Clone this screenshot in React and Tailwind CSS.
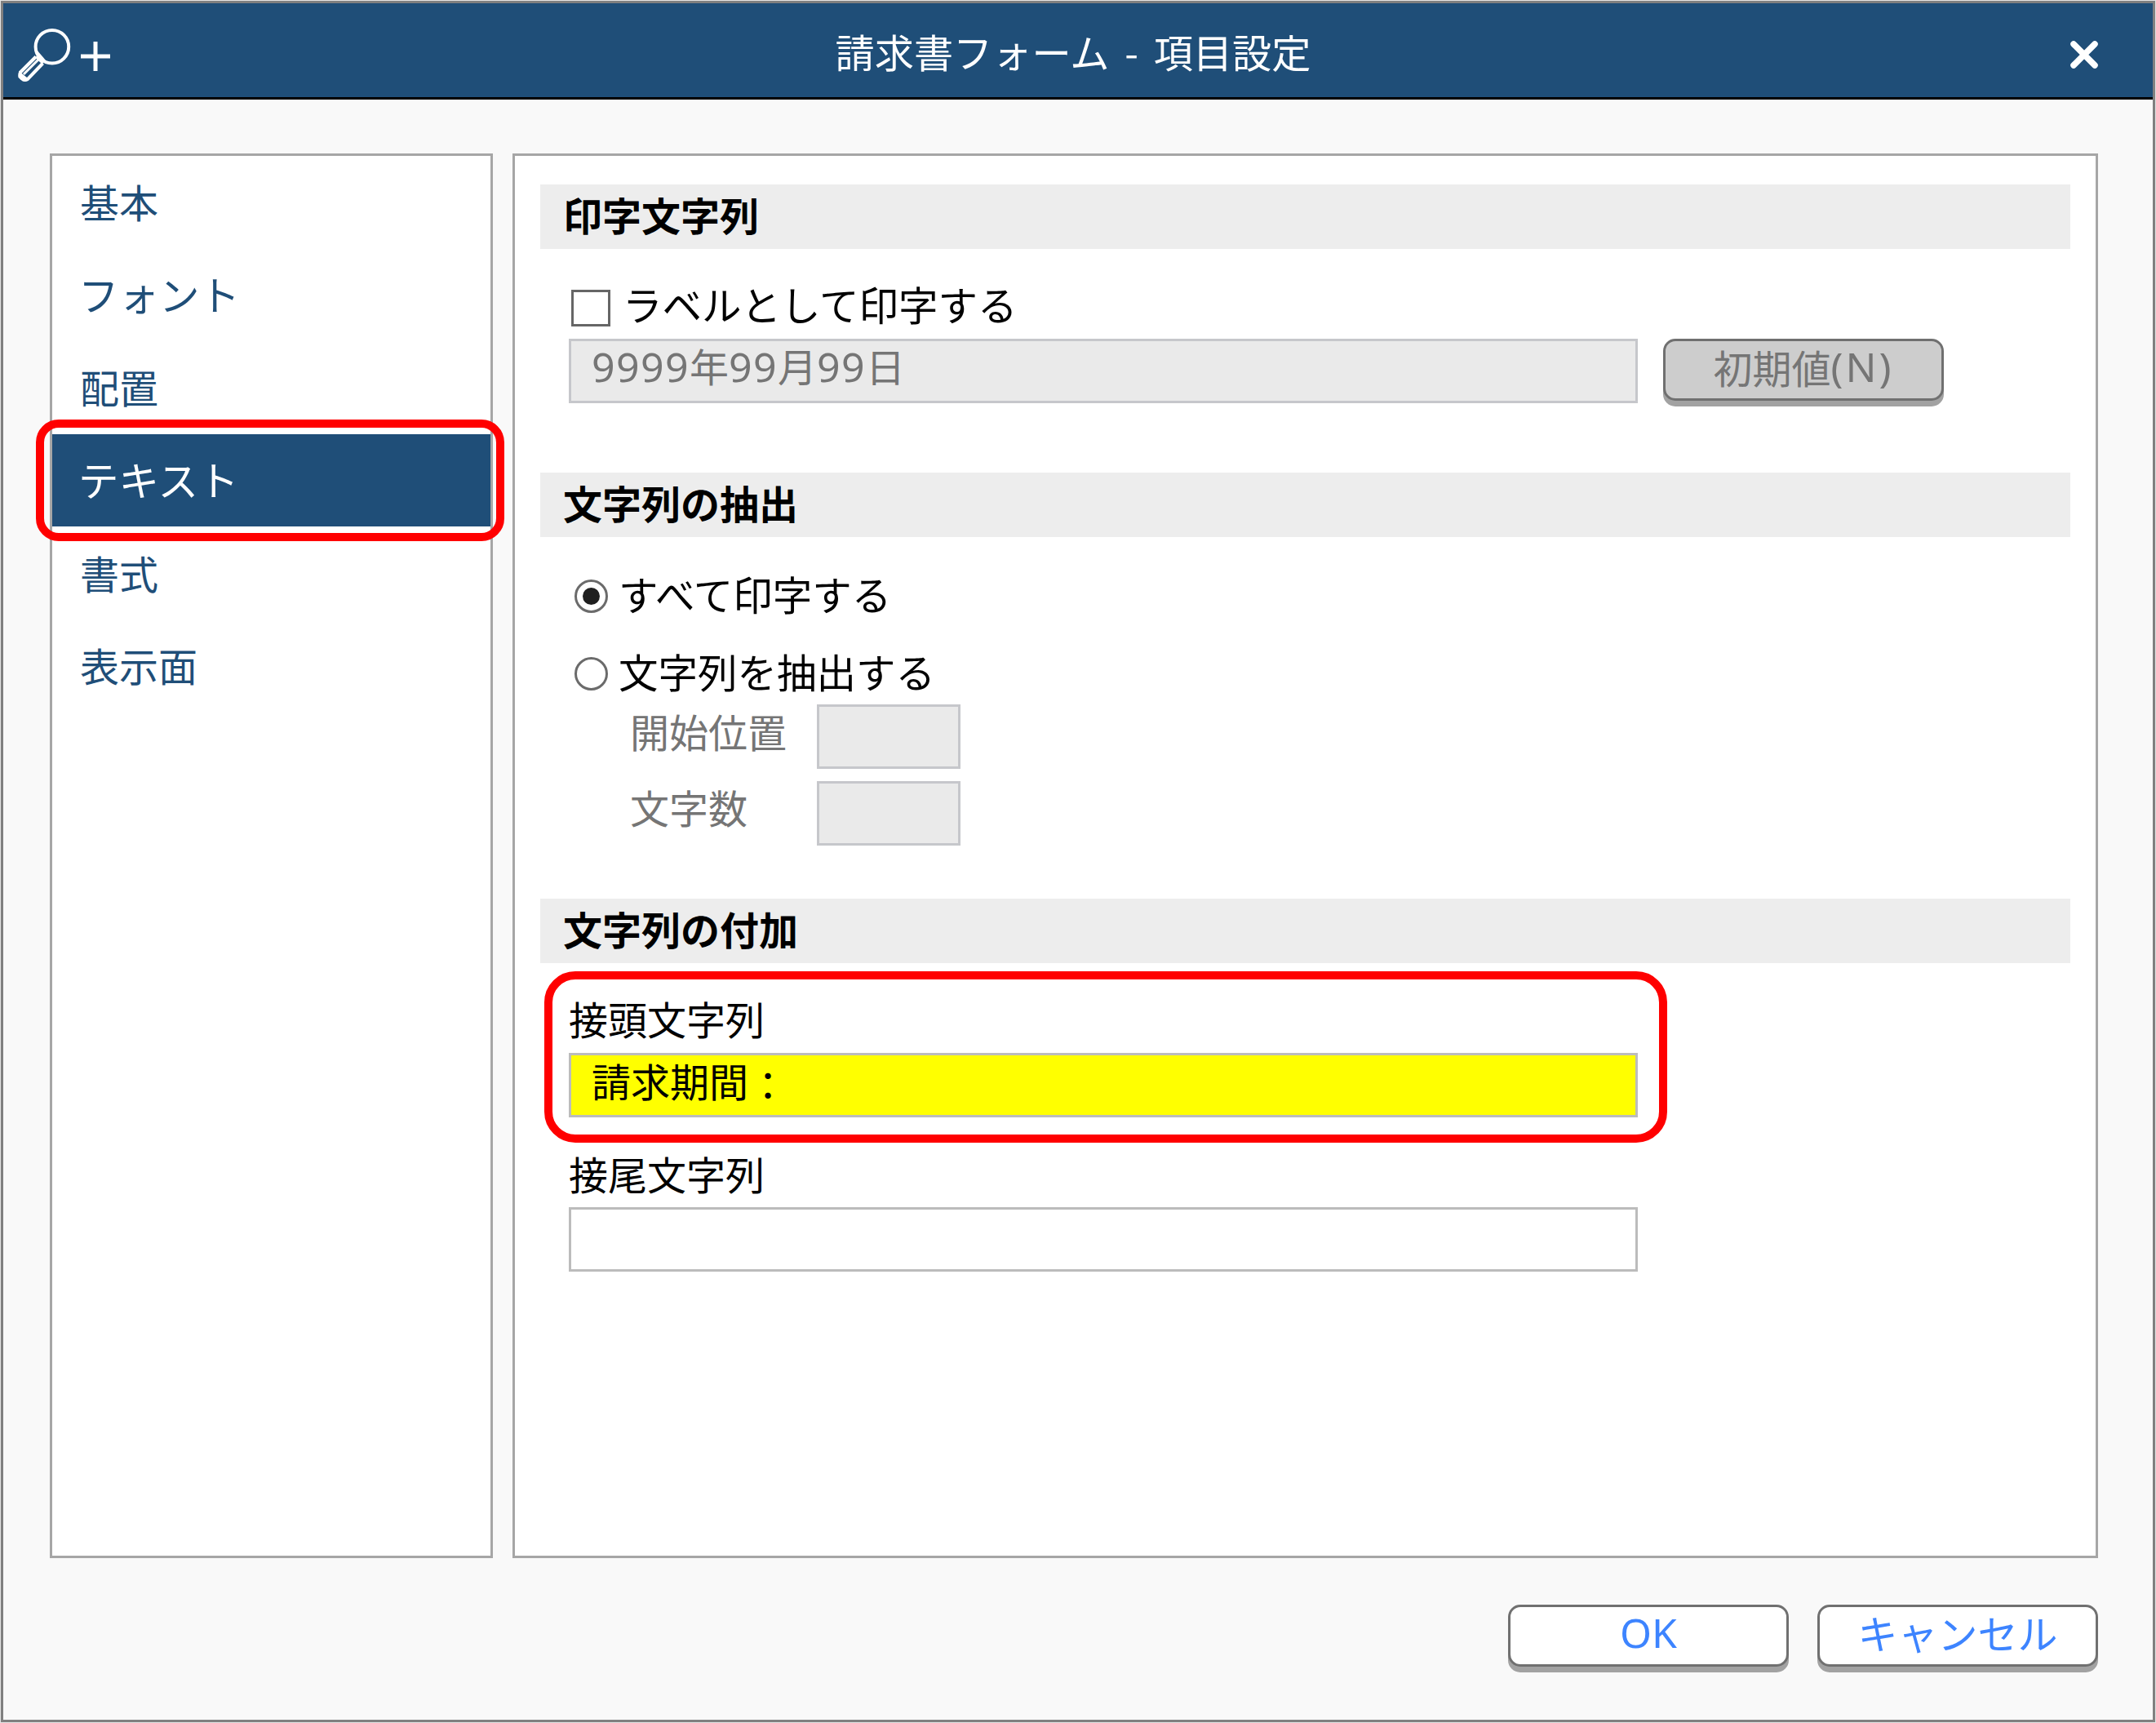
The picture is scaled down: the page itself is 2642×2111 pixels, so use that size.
import clsx from 'clsx'

const navItems = [
  { label: '基本' },
  { label: 'フォント', kana: true },
  { label: '配置' },
  { label: 'テキスト', kana: true, active: true },
  { label: '書式' },
  { label: '表示面' },
]

function MagnifierIcon() {
  return (
    <svg className="h-[72px] w-[120px]" viewBox="0 0 120 72" fill="none" stroke="white">
      <circle cx="45.9" cy="26.3" r="20.3" strokeWidth="4" />
      <path d="M26 38.500 7 57.500a6.500 6.500 0 0 0 9 8.500L34.500 46.500" strokeWidth="4" />
      <path d="M29.500 41.500 11 60" strokeWidth="3" />
      <path d="M26 38.500 34.500 46.500" strokeWidth="3" />
      <path d="M27 32 34 40 38 45" strokeWidth="2.500" />
      <path d="M6 58 16 66 11 67.500 5.500 63.500Z" fill="white" strokeWidth="2" />
      <path d="M81 38h36M99 20v36" strokeWidth="5" />
    </svg>
  )
}

function CloseIcon() {
  return (
    <svg className="h-[34px] w-[34px]" viewBox="0 0 34 34" stroke="white" strokeWidth="7.5" strokeLinecap="round">
      <path d="M4 4 30 30M30 4 4 30" />
    </svg>
  )
}

function Latin({ children, className = 'tracking-[1.4px]' }) {
  return <span className={clsx("font-['Noto_Sans'] text-[50px]", className)}>{children}</span>
}

function SectionTitle({ children }) {
  return <h2 className="flex h-[79px] w-[1875px] items-center bg-[#ededed] pb-[7px] pl-[28px] font-bold">{children}</h2>
}

function TextBox({ children, className }) {
  return (
    <div className={clsx('flex h-[79px] items-center border-[3px] pb-[13px] pl-[25px]', className)}>
      <span className="whitespace-nowrap">{children}</span>
    </div>
  )
}

function Radio({ checked, children, className }) {
  return (
    <label className={clsx('flex h-12 items-center', className)}>
      <span className="flex h-[41px] w-[41px] items-center justify-center rounded-full border-[3px] border-[#6b6b6b] bg-white">
        {checked && <span className="h-[21px] w-[21px] rounded-full bg-[#1f1f1f]" />}
      </span>
      <span className="pb-[7px] pl-[13px] text-[48.5px]">{children}</span>
    </label>
  )
}

function Button({ disabled, children }) {
  return (
    <button
      className={clsx(
        'flex h-[76px] w-[344px] items-center justify-center rounded-[15px] border-[3px] border-[#707070] pb-[9px] shadow-[0_7px_0_#a2a2a2]',
        disabled ? 'bg-[#cdcdcd] text-[#757575]' : 'bg-white text-[#3d84ff]',
      )}
    >
      {children}
    </button>
  )
}

export default function App() {
  return (
    <div className="h-[2111px] w-[2642px] bg-[#e4e4e4] p-px font-['Noto_Sans_CJK_JP',sans-serif] text-[48px] leading-[48px] text-black">
      <div className="flex h-[2109px] w-[2640px] flex-col border-[3px] border-[#808080] bg-[#f9f9f9]">
        <header className="flex h-[118px] shrink-0 items-center justify-between border-b-[3px] border-black bg-[#1f4e78] pt-[11px] pr-[67px] pl-[14px] text-white">
          <div className="flex w-[200px]"><MagnifierIcon /></div>
          <h1 className="mr-[12px] pb-[10px] text-[48.2px] [word-spacing:8px]">請求書フォーム - 項目設定</h1>
          <div className="flex w-[147px] justify-end"><CloseIcon /></div>
        </header>

        <div className="mt-[66px] flex h-[1721px] shrink-0 gap-6 pl-[57px]">
          <nav className="relative w-[543px] border-[3px] border-[#a6a6a6] bg-white">
            {navItems.map(({ label, kana, active }) => (
              <div
                key={label}
                className={clsx(
                  'flex h-[113.6px] items-center pb-[3px]',
                  kana ? 'pl-[32px] text-[49.5px]' : 'pl-[34px]',
                  active ? 'bg-[#1f4e78] text-white' : 'text-[#1f4e78]',
                )}
              >
                {label}
              </div>
            ))}
            <div className="absolute top-[323px] -left-5 h-[149px] w-[574px] rounded-[28px] border-[10px] border-[#ff0000]" />
          </nav>

          <main className="w-[1943px] border-[3px] border-[#a6a6a6] bg-white pt-[35px] pl-[31px]">
            <section className="h-[353px]">
              <SectionTitle>印字文字列</SectionTitle>
              <label className="mt-[46px] flex h-12 items-center pl-[38px]">
                <span className="mt-1 h-[45px] w-12 border-[3px] border-[#666666] bg-white" />
                <span className="pb-[6px] pl-[15px] text-[48.5px]">ラベルとして印字する</span>
              </label>
              <div className="mt-4 flex gap-[31px] pl-[35px]">
                <TextBox className="w-[1310px] border-[#c6c7cb] bg-[#eaeaea] text-[#757575]">
                  <Latin>9999</Latin>年<Latin>99</Latin>月<Latin>99</Latin>日
                </TextBox>
                <Button disabled>初期値<Latin className="tracking-[3px]">(N)</Latin></Button>
              </div>
            </section>

            <section className="h-[522px]">
              <SectionTitle>文字列の抽出</SectionTitle>
              <Radio checked className="mt-[48px] pl-[42px]">すべて印字する</Radio>
              <Radio className="mt-[47px] pl-[42px]">文字列を抽出する</Radio>
              <div className="mt-[14px] flex h-[79px] pl-[110px] text-[#757575]">
                <span className="w-[229px] pt-2">開始位置</span>
                <TextBox className="w-[176px] border-[#c6c7cb] bg-[#eaeaea]" />
              </div>
              <div className="mt-[15px] flex h-[79px] pl-[110px] text-[#757575]">
                <span className="w-[229px] pt-[7px]">文字数</span>
                <TextBox className="w-[176px] border-[#c6c7cb] bg-[#eaeaea]" />
              </div>
            </section>

            <section>
              <SectionTitle>文字列の付加</SectionTitle>
              <div className="relative pt-[43px] pl-[35px]">
                <p>接頭文字列</p>
                <TextBox className="mt-[19px] w-[1310px] border-[#bcbcbc] bg-[#ffff00]">
                  請求期間<span className="inline-block translate-y-1">：</span>
                </TextBox>
                <div className="absolute top-[10px] left-[5px] h-[210px] w-[1376px] rounded-[38px] border-[10px] border-[#ff0000]" />
              </div>
              <div className="pt-[44px] pl-[35px]">
                <p>接尾文字列</p>
                <TextBox className="mt-[18px] w-[1310px] border-[#bcbcbc] bg-white" />
              </div>
            </section>
          </main>
        </div>

        <footer className="mt-[57px] flex justify-end gap-[35px] pr-[67px]">
          <Button><Latin className="tracking-normal">OK</Latin></Button>
          <Button><span className="text-[49px]">キャンセル</span></Button>
        </footer>
      </div>
    </div>
  )
}
